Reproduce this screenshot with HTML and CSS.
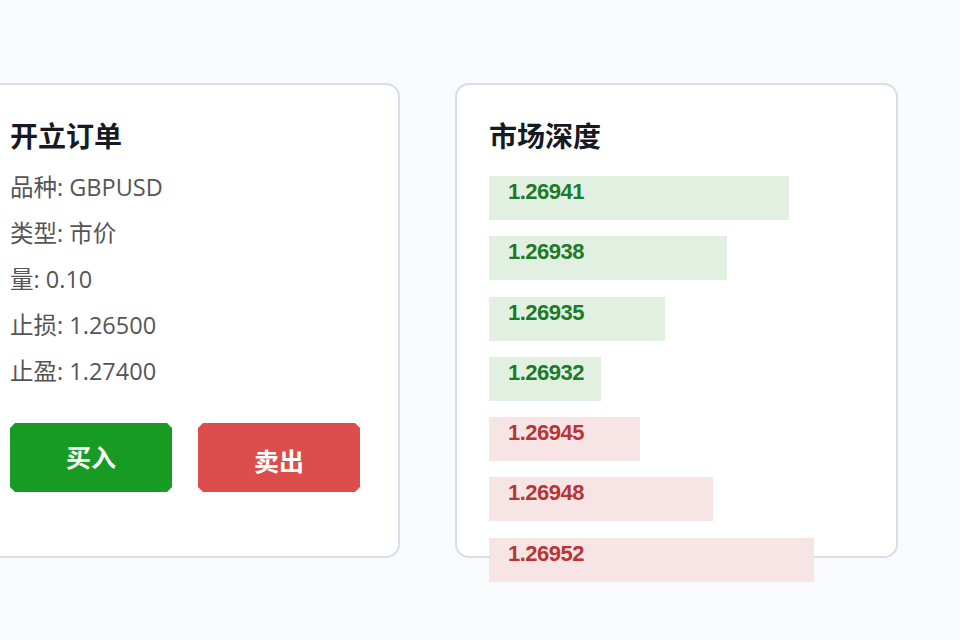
FILE: index.html
```html
<!DOCTYPE html>
<html lang="zh-CN">
<head>
<meta charset="UTF-8">
<title>开立订单 - 市场深度</title>
<link rel="stylesheet" href="styles.css">
</head>
<body>

<div class="panels">
  <!-- 下单 -->
  <div class="card order">
    <h2>开立订单</h2>
    <div class="line">品种: GBPUSD</div>
    <div class="line">类型: 市价</div>
    <div class="line">量: 0.10</div>
    <div class="line">止损: 1.26500</div>
    <div class="line">止盈: 1.27400</div>
    <div class="actions">
      <button class="btn buy">买入</button>
      <button class="btn sell">卖出</button>
    </div>
  </div>

  <!-- 深度 -->
  <div class="card depth">
    <h2>市场深度</h2>
    <div class="bars">
      <div class="bar bid" style="width: 300px">1.26941</div>
      <div class="bar bid" style="width: 238px">1.26938</div>
      <div class="bar bid" style="width: 176px">1.26935</div>
      <div class="bar bid" style="width: 112px">1.26932</div>
      <div class="bar ask" style="width: 151px">1.26945</div>
      <div class="bar ask" style="width: 224px">1.26948</div>
      <div class="bar ask" style="width: 325px">1.26952</div>
    </div>
  </div>
</div>

</body>
</html>
```

FILE: styles.css
```css
html { min-height: 100%; overflow: visible; }
body { margin: 0; min-height: 640px; background: #f8fafc; font-family: "Open Sans", "Noto Sans CJK SC", sans-serif; }
.panels { display: flex; gap: 55px; padding-top: 83px; margin-left: -24px; align-items: flex-start; overflow: visible; }
.card { box-sizing: border-box; height: 475px; background: #fff; border: 2px solid #d6dee9; border-radius: 14px; padding: 30px 32px; overflow: visible; }
.order { width: 424px; flex: none; }
.depth { width: 443px; flex: none; }
h2 { margin: 0; font-size: 28px; line-height: 40px; font-weight: 700; color: #161a22; font-family: "Noto Sans CJK SC", sans-serif; }
.order h2 { margin-bottom: 9px; }
.depth h2 { margin-bottom: 21px; }
.line { font-size: 23.5px; line-height: 46px; color: #555; }
.actions { display: flex; gap: 26px; margin-top: 29px; }
.btn { width: 162px; height: 69px; border: none; color: #fff; font-size: 25px; font-weight: 700;
       font-family: "Noto Sans CJK SC", sans-serif; cursor: pointer;
       clip-path: polygon(5px 0, calc(100% - 5px) 0, 100% 5px, 100% calc(100% - 5px), calc(100% - 5px) 100%, 5px 100%, 0 calc(100% - 5px), 0 5px); }
.buy { background: #179b22; padding-bottom: 4px; }
.sell { background: #dc4d4b; padding-top: 6px; }
.bars { display: flex; flex-direction: column; gap: 16.3px; }
.bar { position: relative; z-index: 1; flex: none; box-sizing: border-box; height: 44px; padding: 0 0 0 19px; line-height: 31px; letter-spacing: -0.5px;
       font-family: "Liberation Sans", Arial, sans-serif; font-weight: 700; font-size: 22px; }
.bid { background: #e2f0e2; color: #1c7a28; }
.ask { background: #f7e4e4; color: #b83535; }
```
